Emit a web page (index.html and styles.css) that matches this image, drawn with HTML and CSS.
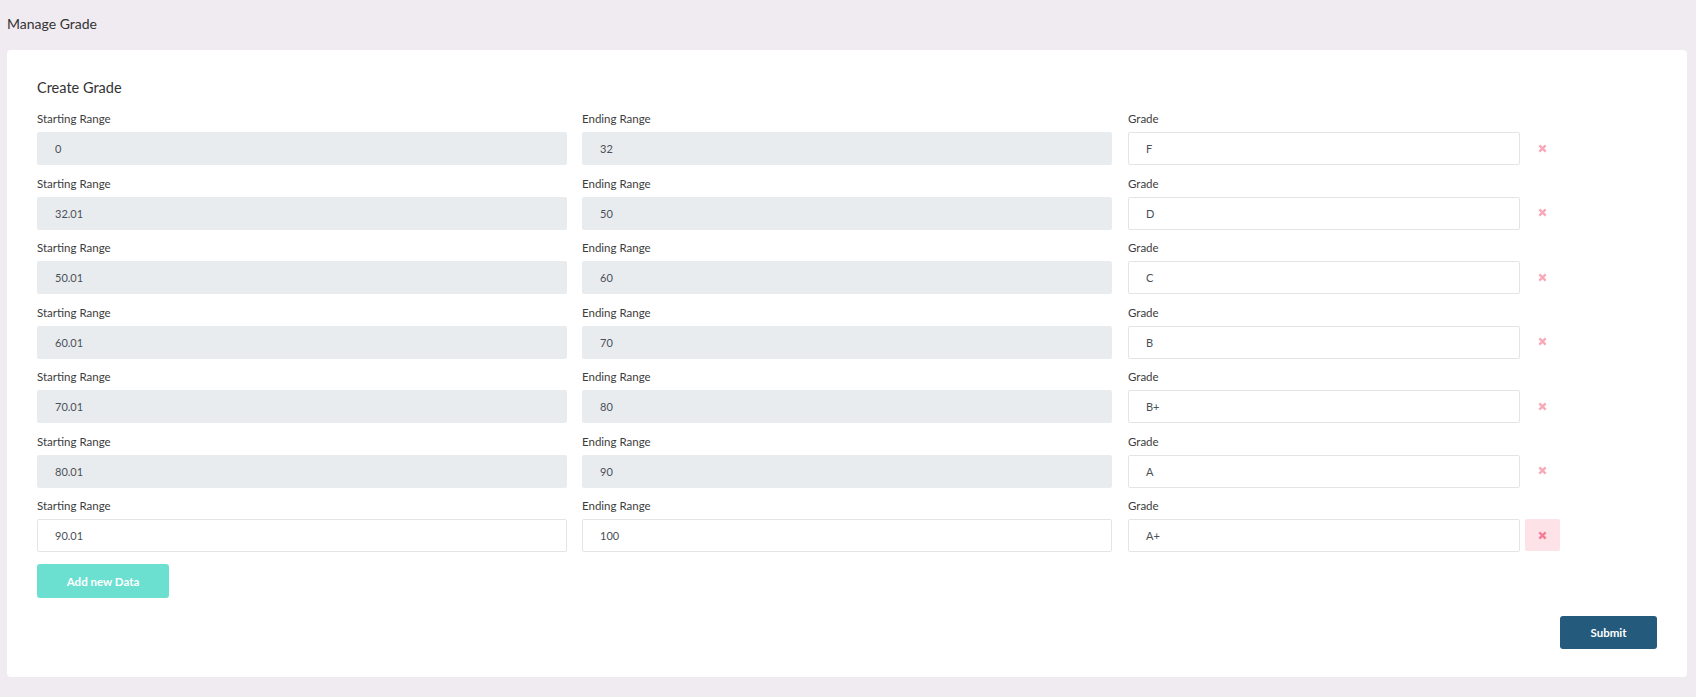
FILE: index.html
```html
<!DOCTYPE html>
<html lang="en">
<head>
<meta charset="utf-8">
<title>Manage Grade</title>
<link rel="stylesheet" href="styles.css">
</head>
<body>
<div class="page">
  <h1 class="page-title">Manage Grade</h1>
  <div class="card">
    <h2 class="card-title">Create Grade</h2>
    <div class="rows">
      <div class="row">
        <div class="field f-start"><label>Starting Range</label><div class="input disabled">0</div></div>
        <div class="field f-end"><label>Ending Range</label><div class="input disabled">32</div></div>
        <div class="field f-grade"><label>Grade</label><div class="input">F</div></div>
        <div class="del faded"><svg viewBox="0 0 10 10" width="9" height="9"><path d="M1.5 1.5 L8.5 8.5 M8.5 1.5 L1.5 8.5" /></svg></div>
      </div>
      <div class="row">
        <div class="field f-start"><label>Starting Range</label><div class="input disabled">32.01</div></div>
        <div class="field f-end"><label>Ending Range</label><div class="input disabled">50</div></div>
        <div class="field f-grade"><label>Grade</label><div class="input">D</div></div>
        <div class="del faded"><svg viewBox="0 0 10 10" width="9" height="9"><path d="M1.5 1.5 L8.5 8.5 M8.5 1.5 L1.5 8.5" /></svg></div>
      </div>
      <div class="row">
        <div class="field f-start"><label>Starting Range</label><div class="input disabled">50.01</div></div>
        <div class="field f-end"><label>Ending Range</label><div class="input disabled">60</div></div>
        <div class="field f-grade"><label>Grade</label><div class="input">C</div></div>
        <div class="del faded"><svg viewBox="0 0 10 10" width="9" height="9"><path d="M1.5 1.5 L8.5 8.5 M8.5 1.5 L1.5 8.5" /></svg></div>
      </div>
      <div class="row">
        <div class="field f-start"><label>Starting Range</label><div class="input disabled">60.01</div></div>
        <div class="field f-end"><label>Ending Range</label><div class="input disabled">70</div></div>
        <div class="field f-grade"><label>Grade</label><div class="input">B</div></div>
        <div class="del faded"><svg viewBox="0 0 10 10" width="9" height="9"><path d="M1.5 1.5 L8.5 8.5 M8.5 1.5 L1.5 8.5" /></svg></div>
      </div>
      <div class="row">
        <div class="field f-start"><label>Starting Range</label><div class="input disabled">70.01</div></div>
        <div class="field f-end"><label>Ending Range</label><div class="input disabled">80</div></div>
        <div class="field f-grade"><label>Grade</label><div class="input">B+</div></div>
        <div class="del faded"><svg viewBox="0 0 10 10" width="9" height="9"><path d="M1.5 1.5 L8.5 8.5 M8.5 1.5 L1.5 8.5" /></svg></div>
      </div>
      <div class="row">
        <div class="field f-start"><label>Starting Range</label><div class="input disabled">80.01</div></div>
        <div class="field f-end"><label>Ending Range</label><div class="input disabled">90</div></div>
        <div class="field f-grade"><label>Grade</label><div class="input">A</div></div>
        <div class="del faded"><svg viewBox="0 0 10 10" width="9" height="9"><path d="M1.5 1.5 L8.5 8.5 M8.5 1.5 L1.5 8.5" /></svg></div>
      </div>
      <div class="row">
        <div class="field f-start"><label>Starting Range</label><div class="input">90.01</div></div>
        <div class="field f-end"><label>Ending Range</label><div class="input">100</div></div>
        <div class="field f-grade"><label>Grade</label><div class="input">A+</div></div>
        <div class="del active"><svg viewBox="0 0 10 10" width="9" height="9"><path d="M1.5 1.5 L8.5 8.5 M8.5 1.5 L1.5 8.5" /></svg></div>
      </div>
    </div>
    <button class="btn btn-add">Add new Data</button>
    <div class="actions">
      <button class="btn btn-submit">Submit</button>
    </div>
  </div>
</div>
</body>
</html>
```
FILE: styles.css
```css
* { box-sizing: border-box; }
html, body {
  margin: 0;
  padding: 0;
  background: #f0ebf1;
  font-family: Lato, "Open Sans", sans-serif;
  color: #343a40;
}
.page {
  padding: 14px 9px 17px 7px;
}
.page-title {
  margin: 0 0 16px 0;
  font-size: 14px;
  line-height: 20px;
  font-weight: 400;
  color: #333;
}
.card {
  background: #fff;
  border-radius: 4px;
  padding: 30px 30px 28px 30px;
}
.card-title {
  margin: 0 0 15px 0;
  font-size: 14.5px;
  line-height: 16px;
  font-weight: 400;
  color: #333;
}
.rows {
  display: flex;
  flex-direction: column;
  gap: 10.5px;
}
.row {
  display: flex;
  align-items: flex-end;
}
.field {
  display: flex;
  flex-direction: column;
}
.field label {
  font-size: 11.5px;
  line-height: 16px;
  margin-bottom: 5px;
  color: #3d3d3d;
}
.f-start { width: 530px; margin-right: 15px; }
.f-end { width: 530px; margin-right: 16px; }
.f-grade { width: 392px; margin-right: 5px; }
.input {
  height: 33px;
  border: 1px solid #e3e4e6;
  border-radius: 2px;
  background: #fff;
  padding: 0 17px;
  font-size: 11px;
  line-height: 31px;
  color: #495057;
}
.input.disabled {
  background: #e9ecef;
  border-color: #e9ecef;
}
.del {
  width: 35px;
  height: 32px;
  margin-bottom: 1px;
  border-radius: 2px;
  display: flex;
  align-items: center;
  justify-content: center;
}
.del svg path {
  fill: none;
  stroke-width: 2.6;
  stroke-linecap: butt;
}
.del.faded svg path { stroke: #f8a9b8; }
.del.active { background: #fde2e7; }
.del.active svg path { stroke: #f27d95; }
.btn {
  border: none;
  font-family: inherit;
  font-weight: 700;
  font-size: 11.5px;
  color: #fff;
  border-radius: 3px;
  cursor: pointer;
}
.btn-add {
  margin-top: 12px;
  width: 132px;
  height: 34px;
  background: #6ce0d0;
}
.actions {
  display: flex;
  justify-content: flex-end;
  margin-top: 18px;
}
.btn-submit {
  width: 97px;
  height: 33px;
  background: #245a7c;
}
```
